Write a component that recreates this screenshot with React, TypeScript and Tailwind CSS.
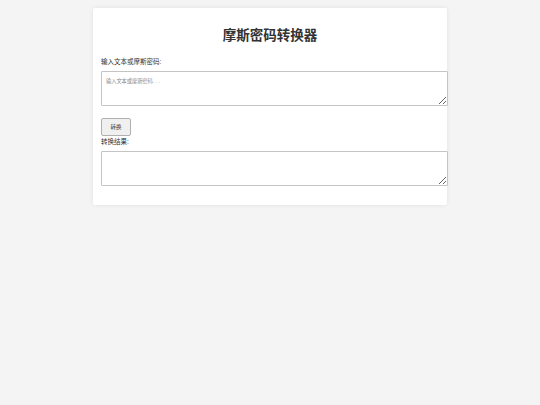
export default function App() {
  return (
    <div
      className="min-h-[405px] w-full bg-[#f4f4f4] pt-[8px]"
      style={{ fontFamily: '"Liberation Sans", "Noto Sans CJK SC", sans-serif' }}
    >
      <div className="mx-auto w-[354px] rounded-[2px] bg-white px-[8px] pt-[19px] pb-[19px] shadow-[0_0_5px_rgba(0,0,0,0.08)]">
        <h1 className="text-center text-[13.5px] leading-[18px] font-bold text-[#333]">摩斯密码转换器</h1>

        <label className="mt-[12px] block text-[6.5px] leading-[9px] text-[#333]">输入文本或摩斯密码:</label>
        <textarea
          className="mt-[5px] block h-[35px] w-[347px] resize-y rounded-[1px] border border-[#c4c4c4] px-[4px] pt-[6px] pb-[4px] text-[5.2px] leading-[7px] text-[#333] placeholder:text-[#8a8a8a] focus:outline-none"
          placeholder="输入文本或摩斯密码. . ."
        />

        <button className="mt-[12px] block h-[18px] w-[30px] rounded-[2px] border border-[#b0b0b0] bg-[#f0f0f0] text-[5.5px] text-[#333]">
          转换
        </button>

        <label className="mt-[1px] block text-[6.5px] leading-[9px] text-[#333]">转换结果:</label>
        <textarea
          readOnly
          className="mt-[5px] block h-[35px] w-[347px] resize-y rounded-[1px] border border-[#c4c4c4] px-[4px] pt-[6px] pb-[4px] text-[5px] leading-[7px] text-[#333] focus:outline-none"
        />
      </div>
    </div>
  );
}
